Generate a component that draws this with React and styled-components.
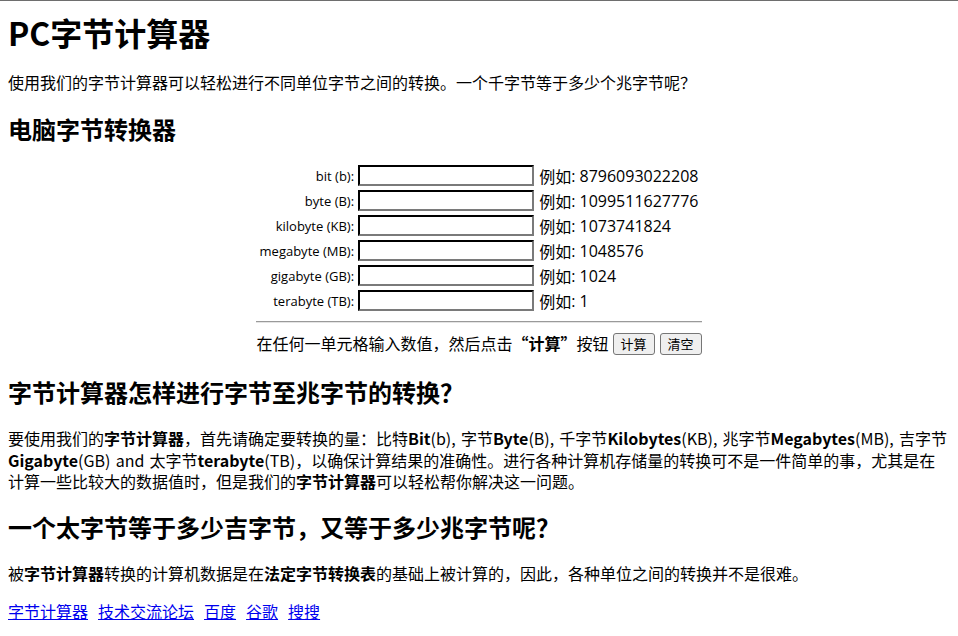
import React from 'react';
import styled, { createGlobalStyle } from 'styled-components';

const GlobalStyle = createGlobalStyle`
  html, body {
    margin: 0;
    padding: 0;
    background: #fff;
  }
  body {
    font-family: "Noto Sans CJK SC", "Noto Sans", sans-serif;
    font-size: 16px;
    color: #000;
  }
`;

const Page = styled.div`
  border-top: 1px solid #6e6e6e;
  padding: 0 8px 20px;
`;

const Title = styled.h1`
  font-size: 32px;
  line-height: 40px;
  font-weight: 700;
  margin: 11px 0 0;
`;

const Heading = styled.h2`
  font-size: 24px;
  line-height: 32px;
  font-weight: 700;
  margin: ${(p) => p.$top || 20}px 0 0;
`;

const Text = styled.p`
  margin: ${(p) => p.$top || 20}px 0 0;
  line-height: ${(p) => p.$lh || 21}px;
  word-spacing: ${(p) => p.$ws || 0}px;
`;

const Converter = styled.div`
  display: grid;
  grid-template-columns: auto 176px auto;
  grid-template-rows: repeat(6, 25px) auto auto;
  column-gap: 3px;
  width: fit-content;
  margin: 18px auto 0;
`;

const Label = styled.label`
  display: flex;
  align-items: center;
  justify-content: flex-end;
  height: 25px;
  font-family: "Open Sans", "Noto Sans CJK SC", sans-serif;
  font-size: 13px;
  padding-right: 1px;
`;

const Field = styled.input`
  box-sizing: border-box;
  width: 176px;
  height: 21px;
  margin-top: 2px;
  border: 2px inset #767676;
  border-top-color: #2b2b2b;
  border-left-color: #2b2b2b;
  border-right-color: #7a7a7a;
  border-bottom-color: #7a7a7a;
  padding: 1px 2px;
  font-size: 13px;
  background: #fff;
`;

const Example = styled.span`
  display: flex;
  align-items: center;
  height: 25px;
  font-size: 16px;
  padding-left: 2px;
  white-space: pre;
`;

const Digits = styled.span`
  font-family: "Open Sans", sans-serif;
`;

const Rule = styled.hr`
  grid-column: 1 / -1;
  margin: 8px 0 8px;
  border: none;
  border-top: 1px solid #9a9a9a;
  border-bottom: 1px solid #e4e4e4;
  height: 0;
`;

const Actions = styled.div`
  grid-column: 1 / -1;
  display: flex;
  align-items: center;
  line-height: 25px;
`;

const Button = styled.button`
  font-family: "Noto Sans CJK SC", sans-serif;
  font-size: 13px;
  line-height: 17px;
  height: 22px;
  padding: 0 7px;
  margin-left: ${(p) => p.$gap || 4}px;
  background: #efefef;
  color: #000;
  border: 1px solid #767676;
  border-radius: 3px;
`;

const Links = styled.nav`
  display: flex;
  gap: 10px;
  margin-top: 17px;
  line-height: 21px;
`;

const Link = styled.a`
  color: #0000ee;
  text-decoration: underline;
`;

const units = [
  ['bit (b):', '8796093022208'],
  ['byte (B):', '1099511627776'],
  ['kilobyte (KB):', '1073741824'],
  ['megabyte (MB):', '1048576'],
  ['gigabyte (GB):', '1024'],
  ['terabyte (TB):', '1'],
];

export default function App() {
  return (
    <Page>
      <GlobalStyle />
      <Title>PC字节计算器</Title>
      <Text>使用我们的字节计算器可以轻松进行不同单位字节之间的转换。一个千字节等于多少个兆字节呢？</Text>
      <Heading>电脑字节转换器</Heading>
      <Converter>
        {units.map(([label, sample]) => (
          <React.Fragment key={label}>
            <Label>{label}</Label>
            <Field type="text" />
            <Example>例如<Digits>: {sample}</Digits></Example>
          </React.Fragment>
        ))}
        <Rule />
        <Actions>
          在任何一单元格输入数值，然后点击<b>“计算”</b>按钮
          <Button>计算</Button>
          <Button $gap={5}>清空</Button>
        </Actions>
      </Converter>
      <Heading $top={20}>字节计算器怎样进行字节至兆字节的转换？</Heading>
      <Text $top={20} $lh={21.5} $ws={1.6}>
        要使用我们的<b>字节计算器</b>，首先请确定要转换的量：比特<b>Bit</b>(b), 字节<b>Byte</b>(B), 千字节<b>Kilobytes</b>(KB), 兆字节<b>Megabytes</b>(MB), 吉字节 <b>Gigabyte</b>(GB) and 太字节<b>terabyte</b>(TB)，以确保计算结果的准确性。进行各种计算机存储量的转换可不是一件简单的事，尤其是在计算一些比较大的数据值时，但是我们的<b>字节计算器</b>可以轻松帮你解决这一问题。
      </Text>
      <Heading $top={18}>一个太字节等于多少吉字节，又等于多少兆字节呢？</Heading>
      <Text $top={20}>
        被<b>字节计算器</b>转换的计算机数据是在<b>法定字节转换表</b>的基础上被计算的，因此，各种单位之间的转换并不是很难。
      </Text>
      <Links>
        <Link href="#">字节计算器</Link>
        <Link href="#">技术交流论坛</Link>
        <Link href="#">百度</Link>
        <Link href="#">谷歌</Link>
        <Link href="#">搜搜</Link>
      </Links>
    </Page>
  );
}
